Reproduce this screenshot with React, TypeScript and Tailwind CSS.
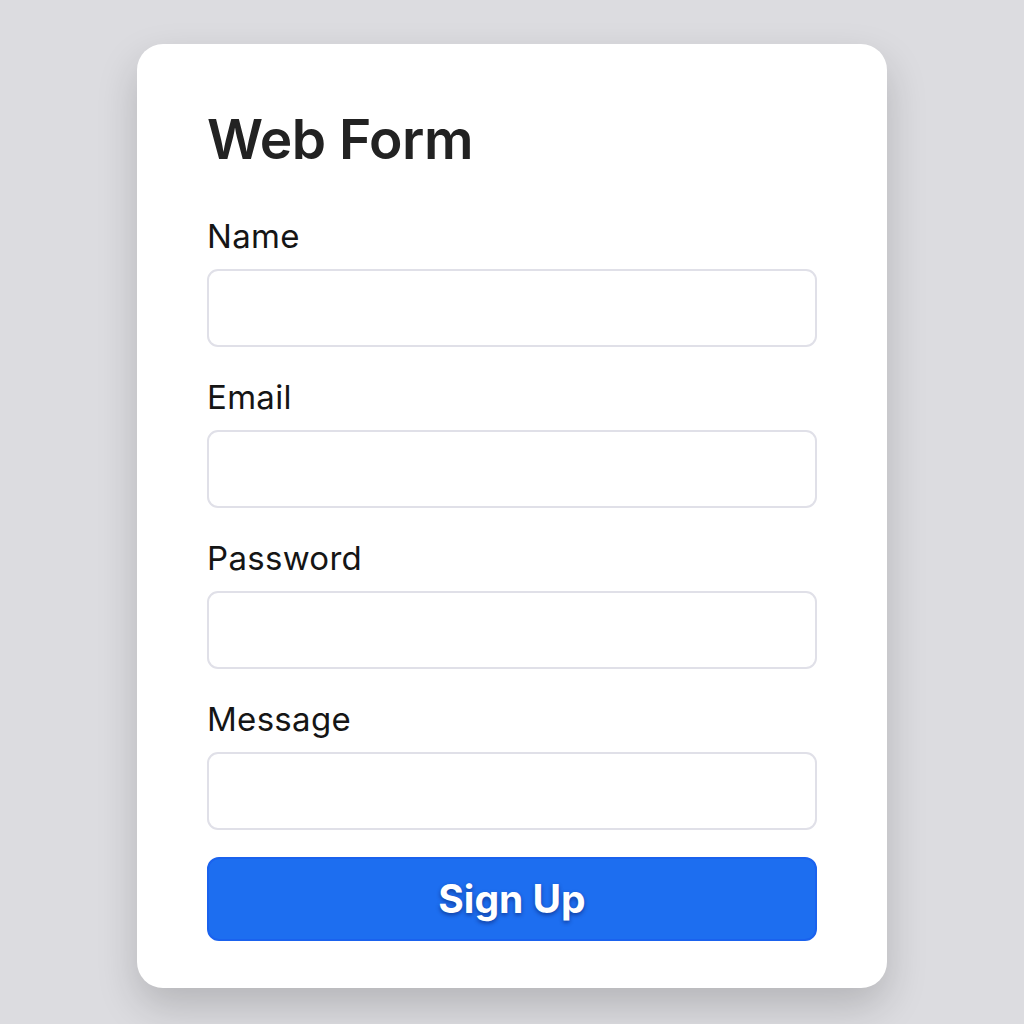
export default function App() {
    const fields = ['Name', 'Email', 'Password', 'Message'];

    return (
        <div className="min-h-screen w-full bg-[#dcdce0] flex items-start justify-center pt-[44px] font-['Inter',sans-serif]">
            <div className="w-[750px] h-[944px] bg-white rounded-[26px] shadow-[0_18px_40px_rgba(0,0,0,0.18)] px-[70px] pt-[68px]">
                <h1 className="text-[55px] leading-none font-semibold text-[#222] tracking-[-0.5px]">Web Form</h1>

                <form className="mt-[53px] flex flex-col" onSubmit={(e) => e.preventDefault()}>
                    <div className="flex flex-col gap-[34px]">
                        {fields.map((label) => (
                            <div key={label} className="flex flex-col">
                                <label className="text-[33px] leading-none text-[#151515] tracking-[0.3px]">{label}</label>
                                <input
                                    type={label === 'Password' ? 'password' : 'text'}
                                    className="mt-[16px] h-[78px] w-full rounded-[11px] border-2 border-[#e0e0e8] bg-white outline-none"
                                />
                            </div>
                        ))}
                    </div>

                    <button
                        type="submit"
                        className="mt-[27px] h-[84px] w-full rounded-[12px] bg-[#1d6ef0] border-2 border-[#1a62ee] text-white text-[39px] font-bold [text-shadow:0_2px_4px_rgba(0,0,60,0.45)]"
                    >
                        Sign Up
                    </button>
                </form>
            </div>
        </div>
    );
}
